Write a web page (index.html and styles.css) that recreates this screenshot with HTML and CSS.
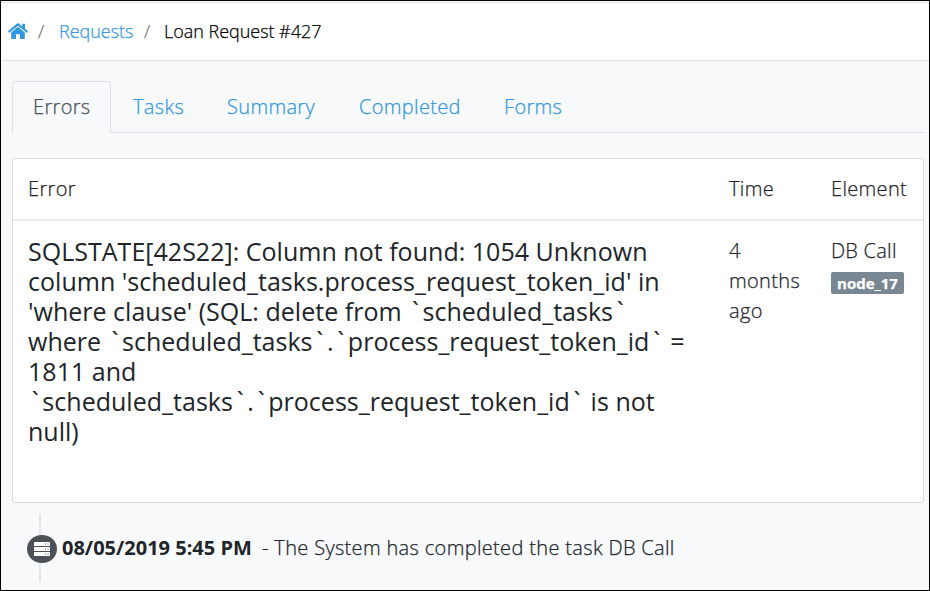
FILE: index.html
```html
<!DOCTYPE html>
<html lang="en">
<head>
<meta charset="utf-8">
<title>Loan Request #427</title>
<link rel="stylesheet" href="styles.css">
</head>
<body>
<div class="page">
  <nav class="breadcrumb">
    <a class="home" href="#" aria-label="Home"><svg viewBox="0 0 20 17" width="20" height="17"><path d="M10 3.7 3.2 9.4V15.4q0 .6.6.6H8V11.2h4V16h4.200q.6 0 .6-.6V9.400z"/><path d="M10 .3q.5 0 .9.3l3.300 2.800V.8h2.800v4.900l2.700 2.300q.4.3.1.7l-.7.800q-.3.300-.7 0L10 2.700 1.600 9.500q-.4.300-.7 0L.2 8.700q-.3-.4.1-.7L9.100.6Q9.500.3 10 .3z"/></svg></a>
    <span class="slash first">/</span>
    <a class="requests" href="#">Requests</a>
    <span class="slash">/</span>
    <span class="current">Loan Request #427</span>
  </nav>
  <main>
    <div class="tabs">
      <a class="tab active" href="#">Errors</a>
      <a class="tab tasks" href="#">Tasks</a>
      <a class="tab summary" href="#">Summary</a>
      <a class="tab completed" href="#">Completed</a>
      <a class="tab forms" href="#">Forms</a>
    </div>
    <section class="card">
      <div class="row head"><div>Error</div><div>Time</div><div>Element</div></div>
      <div class="row body">
        <div class="message">SQLSTATE[42S22]: Column not found: 1054 Unknown<br>column 'scheduled_tasks.process_request_token_id' in<br>'where clause' (SQL: delete from <i>`</i>scheduled_tasks<i>`</i><br>where <i>`</i>scheduled_tasks<i>`</i>.<i>`</i>process_request_token_id<i>`</i> =<br>1811 and<br><i>`</i>scheduled_tasks<i>`</i>.<i>`</i>process_request_token_id<i>`</i> is not<br>null)</div>
        <div>4<br>months<br>ago</div>
        <div><div class="name">DB Call</div><span class="badge">node_17</span></div>
      </div>
    </section>
    <div class="timeline">
      <span class="marker"><svg viewBox="0 0 30 28" width="30" height="28"><ellipse cx="15" cy="14" rx="15" ry="14" fill="#4b5157"/><g fill="#fff"><rect x="7" y="7" width="16" height="4" rx=".5"/><rect x="7" y="12" width="16" height="4" rx=".5"/><rect x="7" y="17" width="16" height="4" rx=".5"/></g><path fill="#4b5157" d="M18 8.500h1v1h-1zM20.500 8.500h1v1h-1zM18 13.500h1v1h-1zM20.500 13.500h1v1h-1zM18 18.500h1v1h-1zM20.500 18.500h1v1h-1z"/></svg></span>
      <strong>08/05/2019 5:45 PM</strong>
      <span class="event">- The System has completed the task DB Call</span>
    </div>
  </main>
</div>
</body>
</html>
```
FILE: styles.css
```css
* { box-sizing: border-box; }
body { margin: 0; font: 300 20px/30px "Open Sans", "Noto Sans", sans-serif; color: #212529; letter-spacing: .34px; -webkit-text-stroke: .25px; }
a { color: #3397e1; text-decoration: none; }
svg { display: block; }
.page { width: 930px; height: 591px; border: 1px solid #000; background: #f7f9fb; overflow: hidden; }
.breadcrumb { height: 60px; padding: 0 0 0 7px; border-bottom: 1px solid #dee2e6; background: linear-gradient(#fff 1px, #e4dfed 1px, #e4dfed 2px, #fff 2px); display: flex; align-items: center; font-size: 18px; letter-spacing: -.03px; white-space: nowrap; }
.home { width: 20px; padding-top: 1px; fill: #3397e1; }
.home svg { stroke: none; }
.slash { color: #6c757d; width: 20px; }
.slash.first { width: 21px; margin-left: 10px; }
.requests { width: 85px; }
.current { color: #000; }
main { padding: 20px 5px 0 11px; }
.tabs { display: flex; height: 52px; border-bottom: 1px solid #dee2e6; }
.tab { height: 51px; padding: 11px 0 0 22px; white-space: nowrap; }
.active { width: 99px; height: 52px; padding: 10px 0 0 20px; border: 1px solid #dee2e6; border-bottom: 0; border-radius: 4px 4px 0 0; background: #f7f9fb; color: #495057; }
.tasks { width: 94px; }
.summary { width: 132px; }
.completed { width: 145px; }
.card { height: 345px; margin-top: 25px; border: 1px solid #dadddf; border-radius: 3px; background: #fff; }
.row { display: grid; grid-template-columns: 701px 102px 107px; }
.row > div { padding: 15px 0 0 15px; white-space: nowrap; }
.head { height: 62px; border-bottom: 2px solid #e9ecef; }
.row > .message { font-size: 25px; line-height: 30px; font-weight: 400; letter-spacing: .02px; -webkit-text-stroke: 0; }
.message i { padding: 0 3.6px 0 3.8px; font-style: normal; }
.name { height: 30px; letter-spacing: .25px; }
.badge { display: flex; align-items: center; justify-content: center; width: 73px; height: 22px; margin-top: 6px; border-radius: 2px; background: #788793; color: #fff; font-size: 15px; line-height: 20px; font-weight: 700; letter-spacing: 0; }
.timeline { display: flex; align-items: center; height: 68px; margin: 11px 0 0 15px; background: linear-gradient(#e3e5e7, #e3e5e7) 12px 0 / 2px 68px no-repeat; white-space: nowrap; }
.marker { width: 35px; padding-top: 1px; }
strong { width: 200px; font-weight: 700; letter-spacing: 0; -webkit-text-stroke: 0; }
```
